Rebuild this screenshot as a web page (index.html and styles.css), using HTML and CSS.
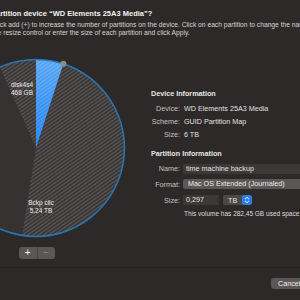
FILE: index.html
```html
<!DOCTYPE html>
<html>
<head>
<meta charset="utf-8">
<link rel="stylesheet" href="styles.css">
</head>
<body>
<div class="dialog">
  <header class="intro">
    <h1 class="title">Partition device “WD Elements 25A3 Media”?</h1>
    <p class="desc">Click add (+) to increase the number of partitions on the device. Click on each partition to change the name and format. Drag<br>the resize control or enter the size of each partition and click Apply.</p>
  </header>
  <main class="content">
    <section class="chart">
      <svg class="pie" width="151" height="184" viewBox="0 0 151 184">
        <defs>
          <pattern id="hatch" width="3" height="3" patternUnits="userSpaceOnUse" patternTransform="rotate(-35)">
            <rect width="3" height="3" fill="#3a3736"/>
            <rect width="3" height="1" fill="#5e5b5a"/>
          </pattern>
          <linearGradient id="blueGrad" x1="0" y1="0" x2="0" y2="1">
            <stop offset="0" stop-color="#58a6f4"/>
            <stop offset="1" stop-color="#1c80f2"/>
          </linearGradient>
          <pattern id="bhatch" width="3" height="3" patternUnits="userSpaceOnUse" patternTransform="rotate(-35)">
            <rect width="3" height="1" fill="rgba(255,255,255,0.18)"/>
          </pattern>
        </defs>
        <circle cx="36" cy="92" r="88.5" fill="#353231"/>
        <path d="M36,92 L63.35,7.83 A88.5,88.5 0 0 1 22.16,179.41 Z" fill="url(#hatch)"/>
        <path d="M36,92 L0,11.15 A88.5,88.5 0 0 1 36,3.5 Z" fill="url(#hatch)"/>
        <path d="M36,92 L36,3.5 A88.5,88.5 0 0 1 63.35,7.83 Z" fill="url(#blueGrad)"/>
        <path d="M36,92 L36,3.5 A88.5,88.5 0 0 1 63.35,7.83 Z" fill="url(#bhatch)"/>
        <circle cx="36" cy="92" r="88.5" fill="none" stroke="#2776b6" stroke-width="1.5"/>
        <circle cx="63.35" cy="7.83" r="3" fill="#8d8c8c"/>
        <text class="plabel" x="22" y="30.5" text-anchor="middle">disk4s4</text>
        <text class="plabel" x="22" y="39" text-anchor="middle">468 GB</text>
        <text class="plabel" x="41" y="148.5" text-anchor="middle">Bckp ciic</text>
        <text class="plabel" x="41" y="157" text-anchor="middle">5,24 TB</text>
      </svg>
      <div class="seg">
        <button class="seg-btn plus">+</button>
        <button class="seg-btn minus">−</button>
      </div>
    </section>
    <section class="info">
      <div class="heading">Device Information</div>
      <div class="row first"><span class="label">Device:</span><span class="value">WD Elements 25A3 Media</span></div>
      <div class="row"><span class="label">Scheme:</span><span class="value">GUID Partition Map</span></div>
      <div class="row"><span class="label">Size:</span><span class="value">6 TB</span></div>
      <div class="heading second">Partition Information</div>
      <div class="row name-row"><span class="label">Name:</span><span class="field name-field">time machine backup</span></div>
      <div class="row format-row"><span class="label">Format:</span><span class="popup">Mac OS Extended (Journaled)</span></div>
      <div class="row size-row"><span class="label">Size:</span><span class="field size-field">0,297</span><span class="unit"><span class="unit-text">TB</span><span class="stepper"><svg width="10" height="10" viewBox="0 0 10 10"><path d="M3.2 4 L5 2.3 L6.8 4 M3.2 6 L5 7.7 L6.8 6" fill="none" stroke="#fff" stroke-width="0.9" stroke-linecap="round" stroke-linejoin="round"/></svg></span></span></div>
      <div class="note">This volume has 282,45 GB used space.</div>
    </section>
  </main>
  <footer class="actions">
    <button class="btn">Cancel</button>
  </footer>
</div>
</body>
</html>
```
FILE: styles.css
```css
html, body {
  margin: 0;
  padding: 0;
}
body {
  width: 300px;
  height: 300px;
  overflow: hidden;
  background: #2c2928;
  font-family: "Liberation Sans", Arial, sans-serif;
  color: #dcdcdc;
}
.dialog {
  width: 300px;
  height: 300px;
  display: flex;
  flex-direction: column;
}
.intro {
  padding-top: 9px;
  white-space: nowrap;
}
.title {
  margin: 0 0 0 -9px;
  font-size: 7.5px;
  line-height: 10px;
  font-weight: bold;
  color: #f2f2f2;
}
.desc {
  margin: 2px 0 0 -8px;
  font-size: 6.7px;
  line-height: 8px;
  color: #d6d6d6;
}
.content {
  display: flex;
  margin-top: 19px;
  height: 211px;
  flex: none;
}
.chart {
  width: 151px;
  flex: none;
  display: flex;
  flex-direction: column;
}
.pie {
  display: block;
}
.plabel {
  font-family: "Liberation Sans", Arial, sans-serif;
  font-size: 6.5px;
  fill: #ececec;
}
.seg {
  display: flex;
  margin: 7px 0 0 19px;
  width: 36px;
  height: 12px;
  background: #5a5756;
  border-radius: 3px;
}
.seg-btn {
  flex: 1;
  border: 0;
  padding: 0;
  background: transparent;
  font-family: "Liberation Sans", Arial, sans-serif;
  font-size: 10px;
  line-height: 12px;
  color: #f4f4f4;
}
.seg-btn.minus {
  color: #8c8a89;
  border-left: 1px solid #474443;
}
.info {
  flex: 1;
  min-width: 0;
  display: flex;
  flex-direction: column;
  padding-top: 33px;
  font-size: 7.2px;
  white-space: nowrap;
}
.heading {
  height: 10px;
  line-height: 10px;
  font-weight: bold;
  color: #e6e6e6;
}
.heading.second {
  margin-top: 8px;
}
.row {
  display: flex;
  align-items: center;
  gap: 3px;
  height: 13px;
}
.row.first {
  margin-top: 3px;
}
.label {
  width: 29px;
  flex: none;
  text-align: right;
  color: #c4c4c4;
}
.value {
  padding-left: 1px;
  color: #e2e2e2;
}
.name-row {
  margin-top: 4px;
  height: 11px;
}
.format-row {
  margin-top: 5px;
  height: 10px;
}
.size-row {
  margin-top: 6px;
  height: 10px;
}
.field {
  height: 10px;
  line-height: 10px;
  background: #3b3837;
  color: #e4e4e4;
  padding-left: 3px;
}
.name-field {
  width: 140px;
  flex: none;
}
.popup {
  width: 140px;
  flex: none;
  height: 10px;
  line-height: 10px;
  background: #5a5756;
  border-radius: 2px;
  padding-left: 5px;
  color: #ececec;
}
.size-field {
  width: 33px;
  flex: none;
}
.unit {
  margin-left: 1px;
  display: flex;
  align-items: center;
  width: 29px;
  height: 10px;
  background: #4b4847;
  border-radius: 2px;
}
.unit-text {
  flex: 1;
  padding-left: 5px;
  color: #e4e4e4;
}
.stepper {
  width: 10px;
  height: 10px;
  background: #2b7ff0;
  border-radius: 3px;
  display: flex;
}
.stepper svg {
  display: block;
}
.note {
  margin-top: 4px;
  padding-left: 33px;
  height: 10px;
  line-height: 10px;
  font-size: 6.5px;
  color: #dedede;
}
.actions {
  border-top: 1px solid #242120;
  flex: 1;
  display: flex;
  justify-content: flex-end;
  align-items: flex-start;
  padding-top: 10px;
}
.btn {
  border: 0;
  margin-right: -12px;
  width: 41px;
  height: 11px;
  padding: 0 0 0 7px;
  text-align: left;
  background: #5a5756;
  border-radius: 3px;
  font-family: "Liberation Sans", Arial, sans-serif;
  font-size: 7.2px;
  line-height: 11px;
  color: #f0f0f0;
}
```
